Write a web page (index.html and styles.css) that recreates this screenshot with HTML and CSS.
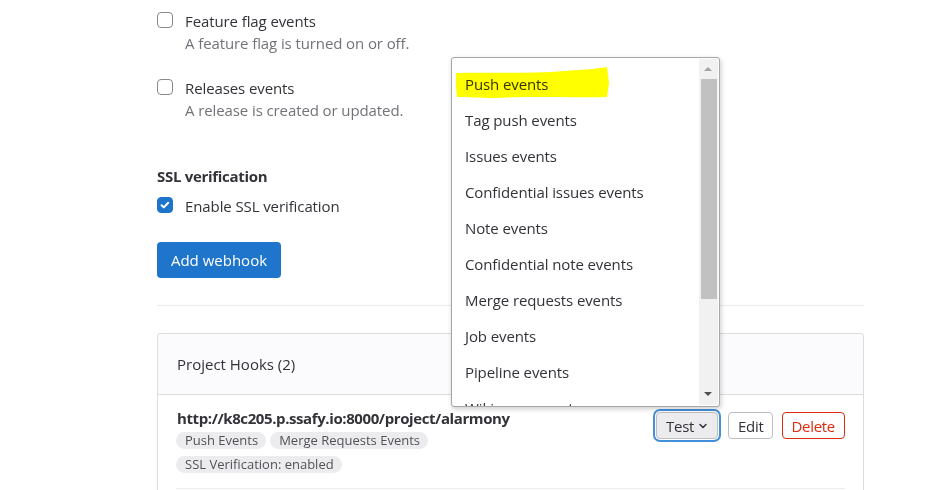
FILE: index.html
```html
<!DOCTYPE html>
<html>
<head>
<meta charset="utf-8">
<link rel="stylesheet" href="styles.css">
</head>
<body>
<div class="page">
  <div class="check-item">
    <span class="box"></span>
    <div class="check-text">
      <div class="label">Feature flag events</div>
      <div class="help">A feature flag is turned on or off.</div>
    </div>
  </div>
  <div class="check-item second">
    <span class="box"></span>
    <div class="check-text">
      <div class="label">Releases events</div>
      <div class="help">A release is created or updated.</div>
    </div>
  </div>

  <div class="section-title">SSL verification</div>
  <div class="check-item ssl">
    <span class="box checked"><svg viewBox="0 0 16 16" width="16" height="16"><path d="M4.6 8.3l2.2 2.1 4.4-4.6" fill="none" stroke="#fff" stroke-width="2" stroke-linecap="round" stroke-linejoin="round"/></svg></span>
    <div class="check-text"><div class="label">Enable SSL verification</div></div>
  </div>

  <button class="btn-primary">Add webhook</button>

  <div class="divider"></div>

  <div class="card">
    <div class="card-header">Project Hooks (2)</div>
    <div class="hook-row">
      <div class="hook-info">
        <div class="hook-url">http://k8c205.p.ssafy.io:8000/project/alarmony</div>
        <div class="badges">
          <span class="badge">Push Events</span>
          <span class="badge">Merge Requests Events</span>
        </div>
        <div class="badges">
          <span class="badge">SSL Verification: enabled</span>
        </div>
      </div>
      <div class="hook-actions">
        <button class="btn btn-test">Test <svg viewBox="0 0 16 16" width="12" height="12"><path d="M4 6l4 4 4-4" fill="none" stroke="#333238" stroke-width="2" stroke-linecap="round" stroke-linejoin="round"/></svg></button>
        <button class="btn btn-edit">Edit</button>
        <button class="btn btn-danger">Delete</button>
      </div>
    </div>
  </div>
</div>

<div class="listbox">
  <div class="options">
    <div class="option">Push events</div>
    <div class="option">Tag push events</div>
    <div class="option">Issues events</div>
    <div class="option">Confidential issues events</div>
    <div class="option">Note events</div>
    <div class="option">Confidential note events</div>
    <div class="option">Merge requests events</div>
    <div class="option">Job events</div>
    <div class="option">Pipeline events</div>
    <div class="option">Wiki page events</div>
  </div>
  <div class="scrollbar">
    <span class="arrow up"></span>
    <span class="thumb"></span>
    <span class="arrow down"></span>
  </div>
</div>

<svg class="highlight" width="160" height="34" viewBox="0 0 160 34">
  <path d="M1 6 C30 5 70 7 110 4 C125 3 140 2 152 0 L154 16 L152 30 C120 31 80 29 40 31 C25 31 12 30 2 30 L1 20 Z" fill="#ffff00"/>
</svg>
</body>
</html>
```
FILE: styles.css
```css
* { box-sizing: border-box; }
html, body { margin: 0; padding: 0; background: #fff; }
body {
  font-family: "Open Sans", "Noto Sans", sans-serif;
  font-size: 15px;
  color: #333238;
  width: 936px;
  height: 490px;
  overflow: hidden;
  position: relative;
}
.page {
  margin-left: 157px;
  width: 707px;
  padding-top: 11px;
}
.check-item {
  display: flex;
  align-items: flex-start;
  gap: 12px;
}
.check-item.second { margin-top: 25px; }
.box {
  width: 16px;
  height: 16px;
  margin-top: 1px;
  border: 1px solid #89888d;
  border-radius: 4px;
  flex: none;
  display: block;
}
.box.checked {
  background: #1f75cb;
  border-color: #1f75cb;
}
.box.checked svg { display: block; margin: -1px; }
.label { line-height: 20px; letter-spacing: -0.1px; }
.help { line-height: 20px; margin-top: 2px; color: #737278; letter-spacing: -0.1px; }
.section-title {
  font-weight: 700;
  margin-top: 46px;
  line-height: 20px;
  letter-spacing: -0.3px;
}
.check-item.ssl { margin-top: 10px; }
.btn-primary {
  margin-top: 26px;
  display: block;
  height: 36px;
  width: 124px;
  border: none;
  border-radius: 4px;
  background: #1f75cb;
  color: #fff;
  font-family: inherit;
  font-size: 15px;
  padding: 0;
}
.divider {
  margin-top: 27px;
  height: 1px;
  background: #ececef;
}
.card {
  margin-top: 27px;
  border: 1px solid #dcdcde;
  border-bottom: none;
  border-radius: 4px 4px 0 0;
  height: 158px;
}
.card-header {
  height: 61px;
  background: #fbfafd;
  border-bottom: 1px solid #dcdcde;
  padding-left: 19px;
  line-height: 61px;
  font-size: 15px;
  border-radius: 4px 4px 0 0;
}
.hook-row {
  margin: 0 18px 0 18px;
  padding-top: 13px;
  height: 94px;
  border-bottom: 1px solid #ececef;
  display: flex;
  justify-content: space-between;
}
.hook-url {
  font-weight: 700;
  font-size: 15px;
  line-height: 20px;
  letter-spacing: -0.4px;
  padding-left: 1px;
}
.badges { display: flex; gap: 4px; margin-top: 4px; }
.badges + .badges { margin-top: 7px; }
.badge {
  background: #ececef;
  color: #535158;
  font-size: 13px;
  line-height: 17px;
  height: 17px;
  padding: 0 8px 0 9px;
  border-radius: 9px;
}
.hook-actions {
  display: flex;
  gap: 9px;
  padding-top: 4px;
}
.btn {
  height: 27px;
  padding: 0 9px;
  border: 1px solid #bfbfc3;
  border-radius: 4px;
  background: #fff;
  color: #333238;
  font-family: inherit;
  font-size: 15px;
  letter-spacing: -0.3px;
  display: flex;
  align-items: center;
  gap: 3px;
}
.btn-edit { padding: 0 8px 0 9px; }
.btn-test {
  background: #ececef;
  box-shadow: 0 0 0 1px #fff, 0 0 0 3px #428fdc;
  padding: 0 8px 0 9px;
  margin-right: 1px;
}
.btn-danger {
  border-color: #dd2b0e;
  color: #dd2b0e;
}

.listbox {
  position: absolute;
  left: 451px;
  top: 57px;
  width: 269px;
  height: 350px;
  border: 1px solid #a6a6a6;
  border-radius: 3px;
  background: #fff;
  box-shadow: 1px 2px 5px rgba(0,0,0,0.2);
  display: flex;
  overflow: hidden;
}
.options {
  flex: 1;
  padding-top: 8px;
  overflow: hidden;
}
.option {
  height: 36px;
  line-height: 36px;
  padding-left: 13px;
  font-size: 15px;
  letter-spacing: -0.1px;
  color: #333238;
  white-space: nowrap;
}
.scrollbar {
  width: 19px;
  margin: 1px 1px 1px 0;
  background: #f1f1f1;
  position: relative;
}
.thumb {
  position: absolute;
  left: 2px;
  right: 1px;
  top: 20px;
  height: 220px;
  background: #c1c1c1;
}
.arrow {
  position: absolute;
  left: 5px;
  width: 0;
  height: 0;
  border-left: 4px solid transparent;
  border-right: 4px solid transparent;
}
.arrow.up { top: 8px; border-bottom: 4px solid #a3a3a3; }
.arrow.down { bottom: 9px; border-top: 4px solid #505050; }

.highlight {
  position: absolute;
  left: 455px;
  top: 67px;
  mix-blend-mode: multiply;
}
```
